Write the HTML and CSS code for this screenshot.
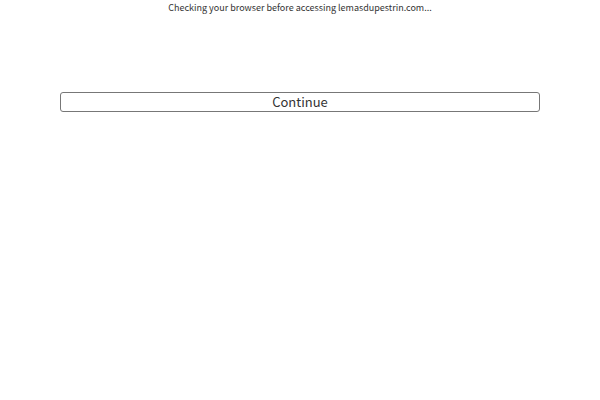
FILE: index.html
```
<!DOCTYPE html>
<html lang="en">
<head>
    <meta charset="UTF-8">
    <meta name="viewport" content="width=device-width, initial-scale=1.0">
    <title>Checking your browser</title>
    <link rel="stylesheet" href="styles.css">
</head>
<body>
    <div class="check">
        <p class="message">Checking your browser before accessing lemasdupestrin.com...</p>
        <button type="button" class="continue">Continue</button>
    </div>
</body>
</html>
```

FILE: styles.css
```
* {
  box-sizing: border-box;
  margin: 0;
  padding: 0;
}

body {
  background: #fff;
  color: #333;
  font-family: "Noto Sans CJK JP", "Noto Sans", sans-serif;
}

.check {
  text-align: center;
}

.message {
  font-size: 9px;
  line-height: 16px;
}

.continue {
  width: 80%;
  margin-top: 76px;
  border: 1px solid #777;
  border-radius: 3px;
  background: #fff;
  color: #333;
  font-family: inherit;
  font-size: 13px;
  line-height: 18px;
  cursor: pointer;
}
```
